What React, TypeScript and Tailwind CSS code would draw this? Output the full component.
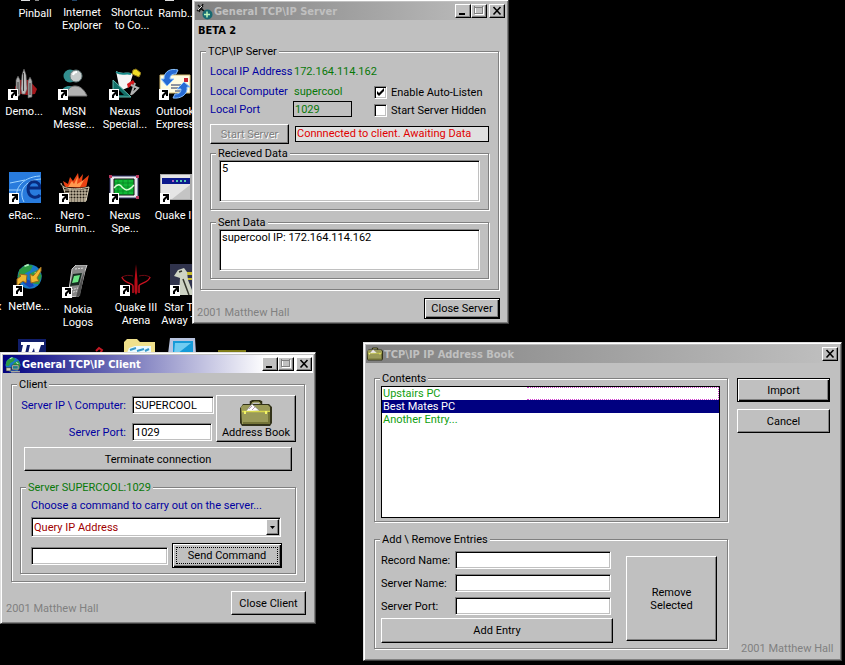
import { useState } from 'react';
import type { ReactNode } from 'react';

const raised =
  'bg-[#c0c0c0] border border-t-white border-l-white border-r-black border-b-black shadow-[inset_-1px_-1px_0_#808080]';
const defaultRaised =
  'bg-[#c0c0c0] border border-black shadow-[inset_1px_1px_0_#fff,inset_-1px_-1px_0_#000,inset_-2px_-2px_0_#808080]';
const sunken =
  'bg-white border border-t-[#808080] border-l-[#808080] border-r-white border-b-white shadow-[inset_1px_1px_0_#000,inset_-1px_-1px_0_#c0c0c0] outline-none';

function CaptionButton({ label, children, className = '' }: { label: string; children: ReactNode; className?: string }) {
  return (
    <button aria-label={label} className={`w-4 h-[14px] flex items-center justify-center ${raised} ${className}`}>
      <svg width="12" height="10" viewBox="0 0 12 10" fill="none" shapeRendering="crispEdges">
        {children}
      </svg>
    </button>
  );
}

type WindowProps = {
  title: string;
  icon: ReactNode;
  className: string;
  bar: string;
  dialog?: boolean;
  children: ReactNode;
};

function Window({ title, icon, className, bar, dialog, children }: WindowProps) {
  return (
    <section
      className={`absolute bg-[#c0c0c0] border border-t-[#dfdfdf] border-l-[#dfdfdf] border-r-[#404040] border-b-[#404040] shadow-[inset_1px_1px_0_#fff,inset_-1px_-1px_0_#808080] p-[2px] ${className}`}
    >
      <header className={`flex items-center h-[18px] px-px ${bar}`}>
        {icon}
        <h2 className="ml-px flex-1 font-bold font-['DejaVu_Sans_Condensed','DejaVu_Sans',sans-serif] text-[11px] leading-[13px] whitespace-nowrap">
          {title}
        </h2>
        {!dialog && (
          <>
            <CaptionButton label="Minimize">
              <path d="M2 8h6" stroke="#000" strokeWidth="2" />
            </CaptionButton>
            <CaptionButton label="Maximize">
              <path d="M2 1.5h9M2.5 1v8M10.5 1v8M2 8.5h9" stroke="#fff" />
              <path d="M1 1h9M1.5 0v8M9.5 0v8M1 7.5h9" stroke="#808080" />
            </CaptionButton>
          </>
        )}
        <CaptionButton label="Close" className="ml-[2px]">
          <path d="M2.500 1l7 7.500M9.500 1l-7 7.500" stroke="#000" strokeWidth="1.600" shapeRendering="auto" />
        </CaptionButton>
      </header>
      {children}
    </section>
  );
}

function Group({ legend, className = '', tone = '', children }: { legend: string; className?: string; tone?: string; children: ReactNode }) {
  return (
    <fieldset className={`min-w-0 border border-[#808080] shadow-[1px_1px_0_#fff,inset_1px_1px_0_#fff] ${className}`}>
      <legend className={`px-[2px] bg-[#c0c0c0] ${tone}`}>{legend}</legend>
      {children}
    </fieldset>
  );
}

function Check({ label, checked }: { label: string; checked?: boolean }) {
  const [on, setOn] = useState(!!checked);
  return (
    <label className="flex items-center gap-1 whitespace-nowrap">
      <span className="relative flex">
        <input
          type="checkbox"
          checked={on}
          onChange={() => setOn(!on)}
          className={`appearance-none w-[13px] h-[13px] ${sunken}`}
        />
        {on && (
          <svg className="absolute inset-0 pointer-events-none" width="13" height="13" viewBox="0 0 13 13">
            <path d="M3 5v3l2 2 5-5V2L5 7z" fill="#000" />
          </svg>
        )}
      </span>
      {label}
    </label>
  );
}

function Briefcase({ width, height }: { width: number; height: number }) {
  return (
    <svg width={width} height={height} viewBox="0 0 32 26">
      <path d="M11 5V2l2-1h6l2 1v3" fill="none" stroke="#2d2d12" strokeWidth="2.500" />
      <path d="M12 5V3l2-1h5l1 1v2" fill="none" stroke="#a9a95c" />
      <path d="M1 7l2-3h26l3 3v16l-2 3H2l-2-3V8z" fill="#33331a" />
      <path d="M1 7l2-2h25l2 2v15l-1 2H2z" fill="#9a9a58" />
      <path d="M5 12l7-8 8 7z" fill="#fff" stroke="#777" strokeWidth=".7" />
      <path d="M9 9l3-3M12 10l3-3" stroke="#b79bb7" />
      <path d="M2 11.500h28" stroke="#d6d64b" strokeWidth="1.500" />
      <path d="M5 11v3M26 11v3" stroke="#f4f466" strokeWidth="2" />
      <path d="M3 23h26V12" fill="none" stroke="#747438" strokeWidth="2" />
    </svg>
  );
}

function Globe() {
  return (
    <>
      <circle cx="17" cy="17" r="14" fill="#1979c9" />
      <path d="M5 9l8-6 8 1-3 6-6 3-3 6-6-1zM18 13l9-4 4 7-3 10-7-1-4-6z" fill="#2d9b43" />
      <path d="M9 24l8 6 5-2-3-6-6-2z" fill="#1944b5" />
      <path d="M11 5l5-2M23 12l4 3" stroke="#b1efbd" strokeWidth="2" />
    </>
  );
}

function DesktopIcon({ label, x, y, labelTop = 38, children }: { label: string[]; x: number; y: number; labelTop?: number; children?: ReactNode }) {
  return (
    <a href="#" className="absolute w-20 text-white text-center" style={{ left: x - 40, top: y }}>
      {children && (
        <svg className="absolute left-6 top-0" width="32" height="33" viewBox="0 0 32 33">
          {children}
          <path d="M0 22h10v11H0z" fill="#fff" />
          <path d="M3 31v-3l3-3H3v-2h6v6H7v-2l-2 2v2z" fill="#000" />
        </svg>
      )}
      <span className="block whitespace-nowrap" style={{ paddingTop: labelTop }}>
        {label.map((line) => (
          <span key={line} className="block">
            {line}
          </span>
        ))}
      </span>
    </a>
  );
}

function DesktopIcons() {
  return (
    <>
      <DesktopIcon label={['Pinball']} x={35} y={-31} />
      <DesktopIcon label={['Internet', 'Explorer']} x={82} y={-32} />
      <DesktopIcon label={['Shortcut', 'to Co...']} x={132} y={-32} />
      <DesktopIcon label={['Ramb...']} x={177} y={-31} />

      <DesktopIcon label={['Demo...']} x={24} y={67}>
        <path d="M7 20l4-7h10l8 9-2 5-8 1-12-2z" fill="#a5161b" />
        <path d="M8 31V13l2-4 2 4v15zM20 31V14l2-4 2 4v16z" fill="#aaa" stroke="#555" strokeWidth=".6" />
        <path d="M13 22l1-14 2-6 2 6 1 14-2 5h-3z" fill="#bbb" stroke="#666" strokeWidth=".6" />
        <path d="M15.500 6v18M10 15v12M22 16v12" stroke="#393939" />
      </DesktopIcon>
      <DesktopIcon label={['MSN', 'Messe...']} x={74} y={67}>
        <circle cx="12" cy="9" r="6.500" fill="#328e8e" />
        <path d="M3 27c1-9 9-9 12-7z" fill="#328e8e" />
        <circle cx="18" cy="9" r="6" fill="#c7cccc" stroke="#647b7b" />
        <path d="M15 8a4 4 0 0 1 4-3" fill="none" stroke="#fff" strokeWidth="2" />
        <path d="M8 29c1-6 4-10 9-10 6 0 10 5 12 10z" fill="#b3b3b3" stroke="#777" />
      </DesktopIcon>
      <DesktopIcon label={['Nexus', 'Special...']} x={125} y={67}>
        <path d="M7 4c7 4 11 0 17 3l-4 13-9 4z" fill="#f5f5f5" />
        <path d="M7 5c7 4 9 0 15 2" fill="none" stroke="#168b89" strokeWidth="2" />
        <path d="M4 13l18 17H4z" fill="#126f68" stroke="#60b9ae" />
        <path d="M10 23l5 5h-5z" fill="#000" />
        <path d="M24 3l3-1 5 4-2 4-7-3z" fill="#efdd26" stroke="#88751a" />
        <path d="M18 17l6-4 2 3-7 5z" fill="#d3151b" />
        <path d="M22 18l7 3-6 6M26 16l-4 12" fill="none" stroke="#b2b2b2" strokeWidth="2" />
      </DesktopIcon>
      <DesktopIcon label={['Outlook', 'Express']} x={175} y={67}>
        <path d="M1 8h30v18H1z" fill="#fffce1" stroke="#d6bd74" />
        <path d="M25 11h4v4h-4z" fill="#c62232" />
        <path d="M12 18h15M12 21h15M16 24h8" stroke="#1b2c60" />
        <path d="M5 12c0-8 7-11 14-9l-2 4c-5 0-6 2-6 5h4l-7 7-6-7z" fill="#276bd4" stroke="#89c2ff" />
        <path d="M28 20c1 8-7 12-14 11l2-4c5 0 6-2 6-5h-4l7-7 6 5z" fill="#276bd4" stroke="#89c2ff" />
      </DesktopIcon>

      <DesktopIcon label={['eRac...']} x={25} y={171}>
        <path d="M0 1h32v31H0z" fill="#287bdd" />
        <path d="M10 32C3 20 12 6 31 5M15 31C9 20 16 9 32 8M1 12l15-3M0 19h12" fill="none" stroke="#9ed4ff" />
        <path d="M31 24c-3 4-12 3-12-6 0-10 12-9 12-1H20" fill="none" stroke="#082b7e" strokeWidth="3" />
      </DesktopIcon>
      <DesktopIcon label={['Nero -', 'Burnin...']} x={75} y={171}>
        <path d="M6 16L4 10l5 3 2-7 3 4 5-8 1 6 4-5-1 7 7-6-3 13z" fill="#e94213" />
        <path d="M9 16l4-6 2 3 4-8-1 8 7-4-4 7z" fill="#ff9950" />
        <path d="M2 12l5 4c7 2 15 1 23-1l-3 15-19 1z" fill="#211b12" />
        <path d="M2 12c0 7 18 7 28 4l-3 14H9L4 16M5 19h24M7 22h22M7 25h21M8 28h20M11 18v13M14 19v12M17 19v12M20 19v12M23 19v12M26 18v13" fill="none" stroke="#eee2c7" strokeWidth=".9" />
      </DesktopIcon>
      <DesktopIcon label={['Nexus', 'Spe...']} x={125} y={171}>
        <path d="M1 5h28v22H1z" fill="#e9e9ee" stroke="#35356a" />
        <path d="M5 8h20v16H5z" fill="#10b936" stroke="#111" />
        <path d="M5 12h20M5 16h20M5 20h20M9 8v16M14 8v16M19 8v16" stroke="#067b20" strokeWidth=".7" />
        <path d="M5 17c5-6 7-2 9 0s5 4 11-3" fill="none" stroke="#dbffd6" strokeWidth="1.500" />
        <path d="M0 4h3v3H0zM27 4h3v3h-3zM27 25h3v3h-3z" fill="#ba385d" />
      </DesktopIcon>
      <DesktopIcon label={['Quake III']} x={176} y={171}>
        <path d="M0 3h32v26H0z" fill="#aaa" />
        <path d="M1 4h29v24H1z" fill="#e5e5e5" />
        <path d="M2 7h28v6H2z" fill="#0b198d" />
        <path d="M12 9h2v2h-2z" fill="#b060c0" />
        <path d="M16 9h2v2h-2zM20 9h2v2h-2zM24 9h2v2h-2z" fill="#55c7ae" />
        <path d="M30 14v14H12z" fill="#c4c4c4" />
      </DesktopIcon>

      <DesktopIcon label={['NetMe...']} x={29} y={263} labelTop={37}>
        <g transform="translate(2 -1) scale(.86)">
          <Globe />
        </g>
        <path d="M4 22v-6l4-3-2-2 8 1-1 8-3-2-5 4zM27 5l-7 8-3-2 1 9 8-2-2-3 4-7V4z" fill="#f1b931" stroke="#936720" />
      </DesktopIcon>
      <DesktopIcon label={['Nokia', 'Logos']} x={78} y={265}>
        <path d="M10 4l4-4h11l-2 6-6 25-11 1z" fill="#888" stroke="#ccc" />
        <path d="M11 9l9-1-3 12-9 1z" fill="#162b21" />
        <path d="M12 11l6-1-2 7-6 1z" fill="#6be584" />
        <path d="M13 4l9-1M9 25l7-2M8 28l7-2" stroke="#ddd" strokeDasharray="2 1" />
        <path d="M23 5l-5 26-4 1 5-17z" fill="#505050" />
      </DesktopIcon>
      <DesktopIcon label={['Quake III', 'Arena']} x={136} y={263}>
        <path d="M16 1l1.500 17v11L16 32l-1.500-3V18z" fill="#b90b17" />
        <path d="M2 14c1 6 11 6 11 9v7M30 14c-1 6-11 6-11 9v7" fill="none" stroke="#cb1220" strokeWidth="1.500" />
        <path d="M2 14c4-2 7-2 11-1M30 14c-4-2-7-2-11-1" fill="none" stroke="#700b13" />
      </DesktopIcon>
      <DesktopIcon label={['Star Trek', 'Away Te...']} x={186} y={263}>
        <path d="M0 1h32v31H0z" fill="#30334c" />
        <path d="M16 9h16v3H16zM16 15h16v2H16z" fill="#c8bb2c" />
        <path d="M4 13l4-6 6-2 3 4 1 8 6 15H9l1-17z" fill="#cdd3c4" />
        <path d="M9 9l3-1M13 16l6 16" stroke="#34362c" strokeWidth="1.500" />
      </DesktopIcon>
      <span className="absolute -left-1 top-[300px] text-white">x</span>

      {/* tops of the icons behind the client window */}
      <svg className="absolute left-0 top-[334px]" width="260" height="20" viewBox="0 0 260 20">
        <path d="M18 5h28v15H18z" fill="#101d69" />
        <path d="M21 8h23v3h-3l-3 9h-3l-1-6-3 6h-3l2-9h-3l-2 9h-4l2-9h-2z" fill="#fff" />
        <path d="M96 17l3-3 3 2-2 4" fill="none" stroke="#c41924" strokeWidth="2" />
        <path d="M124 19V8l3-3h10l3 3h15v11z" fill="#efe08b" />
        <path d="M127 19l2-5 6-2h16v7z" fill="#e9faff" />
        <path d="M130 16l6-2M137 17l7-2M145 17l4-2" stroke="#3598c8" strokeWidth="2" />
        <path d="M168 20l2-16h25l1 16z" fill="#b8c4df" />
        <path d="M173 7h20v13h-20z" fill="#159ad8" />
        <path d="M175 9h16l-14 11h-3z" fill="#70ccf1" />
        <path d="M218 16h28v4h-28z" fill="#7f7b17" />
      </svg>
      <svg className="absolute left-0 top-0" width="190" height="3" viewBox="0 0 190 3">
        <path d="M21 0h9v1h-9zM165 0h9v1h-9z" fill="#ddd" />
        <path d="M35 0h4v1h-4z" fill="#888" />
        <path d="M72 0h5v1h-5z" fill="#246" />
      </svg>
    </>
  );
}

function ServerWindow() {
  const icon = (
    <svg width="17" height="17" viewBox="0 0 17 17">
      <path d="M1 8l6-5M2 2l5 5M7 1L3 9M5 6l6 4" stroke="#111" strokeWidth="1.500" />
      <path d="M2 7l4-4" stroke="#e6e6e6" />
      <circle cx="11.500" cy="11.500" r="5" fill="#176a72" />
      <path d="M8 11.500h6M11 8.500v6" stroke="#bcf6ba" strokeWidth="1.500" />
    </svg>
  );
  return (
    <Window
      title="General TCP\IP Server"
      icon={icon}
      className="left-[192px] -top-px w-[317px]"
      bar="bg-linear-to-r/srgb from-[#808080] to-[#c0c0c0] text-[#c0c0c0]"
    >
      <div className="px-[2px] pt-1 pb-[2px]">
        <h3 className="px-px font-bold font-['DejaVu_Sans_Condensed','DejaVu_Sans',sans-serif]">BETA 2</h3>
        <Group legend="TCP\IP Server" className="mt-2 ml-[3px] mr-[5px] pl-[9px] pr-[9px] pb-[10px] [&>legend]:-ml-1">
          <div className="flex pt-[7px]">
            <span className="w-[84px] text-[#0000a0]">Local IP Address</span>
            <span className="text-[#087808]">172.164.114.162</span>
          </div>
          <div className="flex mt-[7px]">
            <div className="w-[164px]">
              <div className="flex">
                <span className="w-[84px] text-[#0000a0]">Local Computer</span>
                <span className="text-[#087808]">supercool</span>
              </div>
              <div className="flex items-center mt-[3px]">
                <label htmlFor="local-port" className="w-[83px] text-[#0000a0]">
                  Local Port
                </label>
                <input
                  id="local-port"
                  defaultValue="1029"
                  className="w-[59px] h-4 px-px border border-black bg-[#c0c0c0] text-[#087808] outline-none"
                />
              </div>
            </div>
            <div className="flex flex-col gap-[5px] pt-px">
              <Check label="Enable Auto-Listen" checked />
              <Check label="Start Server Hidden" />
            </div>
          </div>
          <div className="flex items-center gap-[6px] mt-[7px]">
            <button disabled className={`w-[79px] h-5 text-[#808080] [text-shadow:1px_1px_0_#fff] ${raised}`}>
              Start Server
            </button>
            <p className="flex-1 h-4 px-px border border-black bg-[#e0e0e0] text-[#e00000] leading-[14px] whitespace-nowrap">
              Connnected to client. Awaiting Data
            </p>
          </div>
          <Group legend="Recieved Data" className="mt-[3px] px-2 pb-[7px] [&>legend]:-ml-[3px]">
            <textarea aria-label="Recieved Data" defaultValue="5" className={`block w-full h-[42px] px-[2px] pt-px resize-none ${sunken}`} />
          </Group>
          <Group legend="Sent Data" className="mt-[6px] px-2 pb-[7px] [&>legend]:-ml-[3px]">
            <textarea
              aria-label="Sent Data"
              defaultValue="supercool IP: 172.164.114.162"
              className={`block w-full h-[42px] px-[2px] pt-px resize-none ${sunken}`}
            />
          </Group>
        </Group>
        <div className="flex items-end justify-between mt-2 pr-1">
          <small className="text-[11px] text-[#808080]">2001 Matthew Hall</small>
          <button className={`w-[76px] h-[21px] ${defaultRaised}`}>Close Server</button>
        </div>
      </div>
    </Window>
  );
}

function ClientWindow() {
  const icon = (
    <svg width="17" height="17" viewBox="0 0 32 32">
      <Globe />
      <path d="M15 17h13v9H15zM4 22h9v6H4z" fill="#d4d1b9" stroke="#222" />
      <path d="M17 19h9v5h-9z" fill="#1d7b89" />
      <path d="M13 28h17v3H13z" fill="#a9a79c" />
    </svg>
  );
  return (
    <Window
      title="General TCP\IP Client"
      icon={icon}
      className="left-0 top-[352px] w-[316px]"
      bar="bg-linear-to-r/srgb from-[#000080] to-white to-85% text-white"
    >
      <div className="px-[3px] pt-[5px] pb-[6px]">
        <Group legend="Client" className="mx-[5px] px-2 pb-[7px] [&>legend]:-ml-[3px]">
          <div className="flex items-center justify-between pt-1">
            <div className="flex flex-col gap-[9px]">
              <div className="flex items-center">
                <label htmlFor="server-ip" className="w-[106px] mr-[6px] text-right text-[#0000a0] whitespace-nowrap">
                  Server IP \ Computer:
                </label>
                <input id="server-ip" defaultValue="SUPERCOOL" className={`w-[82px] h-[18px] px-[2px] ${sunken}`} />
              </div>
              <div className="flex items-center">
                <label htmlFor="server-port" className="w-[106px] mr-[6px] text-right text-[#0000a0]">
                  Server Port:
                </label>
                <input id="server-port" defaultValue="1029" className={`w-20 h-[18px] px-[2px] ${sunken}`} />
              </div>
            </div>
            <button className={`flex flex-col items-center justify-end w-20 h-[47px] pb-[2px] ${raised}`}>
              <Briefcase width={32} height={26} />
              Address Book
            </button>
          </div>
          <div className="mt-[5px] px-1">
            <button className={`w-full h-6 ${raised}`}>Terminate connection</button>
          </div>
          <Group legend="Server SUPERCOOL:1029" tone="text-[#087808]" className="mt-[10px] px-[10px] pb-[5px] [&>legend]:-ml-[5px]">
            <label htmlFor="command" className="block pt-[5px] text-[#0000a0]">
              Choose a command to carry out on the server...
            </label>
            <div className="relative mt-[5px] mr-1">
              <select id="command" className={`block w-full h-5 px-[2px] appearance-none text-[#a00000] ${sunken}`}>
                <option>Query IP Address</option>
              </select>
              <span className={`absolute right-[2px] top-[2px] flex items-center justify-center w-[13px] h-4 pointer-events-none ${raised}`}>
                <svg width="5" height="3" viewBox="0 0 5 3">
                  <path d="M0 0h5L2.500 3z" fill="#000" />
                </svg>
              </span>
            </div>
            <div className="flex items-center gap-1 mt-[6px] mr-[3px]">
              <input aria-label="Command data" className={`flex-1 min-w-0 h-[18px] px-[2px] ${sunken}`} />
              <button className={`w-[110px] h-[25px] p-[3px] ${defaultRaised}`}>
                <span className="flex items-center justify-center h-full border border-dotted border-black">Send Command</span>
              </button>
            </div>
          </Group>
        </Group>
        <div className="flex items-end justify-between mt-[9px] pr-1">
          <small className="text-[11px] text-[#808080]">2001 Matthew Hall</small>
          <button className={`w-[75px] h-6 ${raised}`}>Close Client</button>
        </div>
      </div>
    </Window>
  );
}

const entries = ['Upstairs PC', 'Best Mates PC', 'Another Entry...'];
const fields = ['Record Name:', 'Server Name:', 'Server Port:'];

function AddressBook() {
  const [selected, setSelected] = useState(1);
  return (
    <Window
      title="TCP\IP IP Address Book"
      icon={<Briefcase width={16} height={14} />}
      className="left-[363px] top-[342px] w-[479px]"
      bar="bg-linear-to-r/srgb from-[#808080] to-[#c0c0c0] text-[#c0c0c0]"
      dialog
    >
      <div className="flex gap-[9px] pl-2 pr-[9px] pt-[9px] pb-[9px]">
        <div className="flex-1 min-w-0">
          <Group legend="Contents" className="pl-[6px] pr-[7px] pb-[3px] [&>legend]:-ml-px">
            <ul role="listbox" aria-label="Contents" className="mt-px h-[132px] bg-white border border-black text-[#10a010] leading-[14px]">
              {entries.map((entry, i) => (
                <li
                  key={entry}
                  role="option"
                  aria-selected={i === selected}
                  onClick={() => setSelected(i)}
                  className={`flex h-[13px] ${i === selected ? 'bg-[#000080] text-white' : ''}`}
                >
                  <span className="flex-1 pl-px">{entry}</span>
                  {i === 0 && <span className="w-[192px] border border-l-0 border-dotted border-[#d040d0]" />}
                </li>
              ))}
            </ul>
          </Group>
          <Group legend="Add \ Remove Entries" className="mt-[11px] pl-[6px] pr-[10px] pb-[5px] [&>legend]:-ml-px">
            <div className="flex items-end gap-[13px] pt-[5px]">
              <div className="flex-1">
                <div className="flex flex-col gap-[5px]">
                  {fields.map((field) => (
                    <label key={field} className="flex items-center">
                      <span className="w-[74px]">{field}</span>
                      <input className={`flex-1 min-w-0 mr-[2px] h-[18px] px-[2px] ${sunken}`} />
                    </label>
                  ))}
                </div>
                <button className={`block w-full h-[25px] mt-[3px] ${raised}`}>Add Entry</button>
              </div>
              <button className={`w-[91px] h-[85px] mb-[2px] ${raised}`}>
                Remove
                <br />
                Selected
              </button>
            </div>
          </Group>
        </div>
        <div className="flex flex-col w-[93px] pt-[6px]">
          <button className={`h-6 ${defaultRaised}`}>Import</button>
          <button className={`mt-[7px] h-6 ${raised}`}>Cancel</button>
          <small className="mt-auto -mb-[6px] pl-1 text-[11px] text-[#808080] whitespace-nowrap">2001 Matthew Hall</small>
        </div>
      </div>
    </Window>
  );
}

export default function App() {
  return (
    <main className="relative min-h-screen overflow-hidden bg-black text-black text-[11px] leading-[13px] font-['Roboto',sans-serif]">
      <DesktopIcons />
      <ServerWindow />
      <ClientWindow />
      <AddressBook />
    </main>
  );
}
